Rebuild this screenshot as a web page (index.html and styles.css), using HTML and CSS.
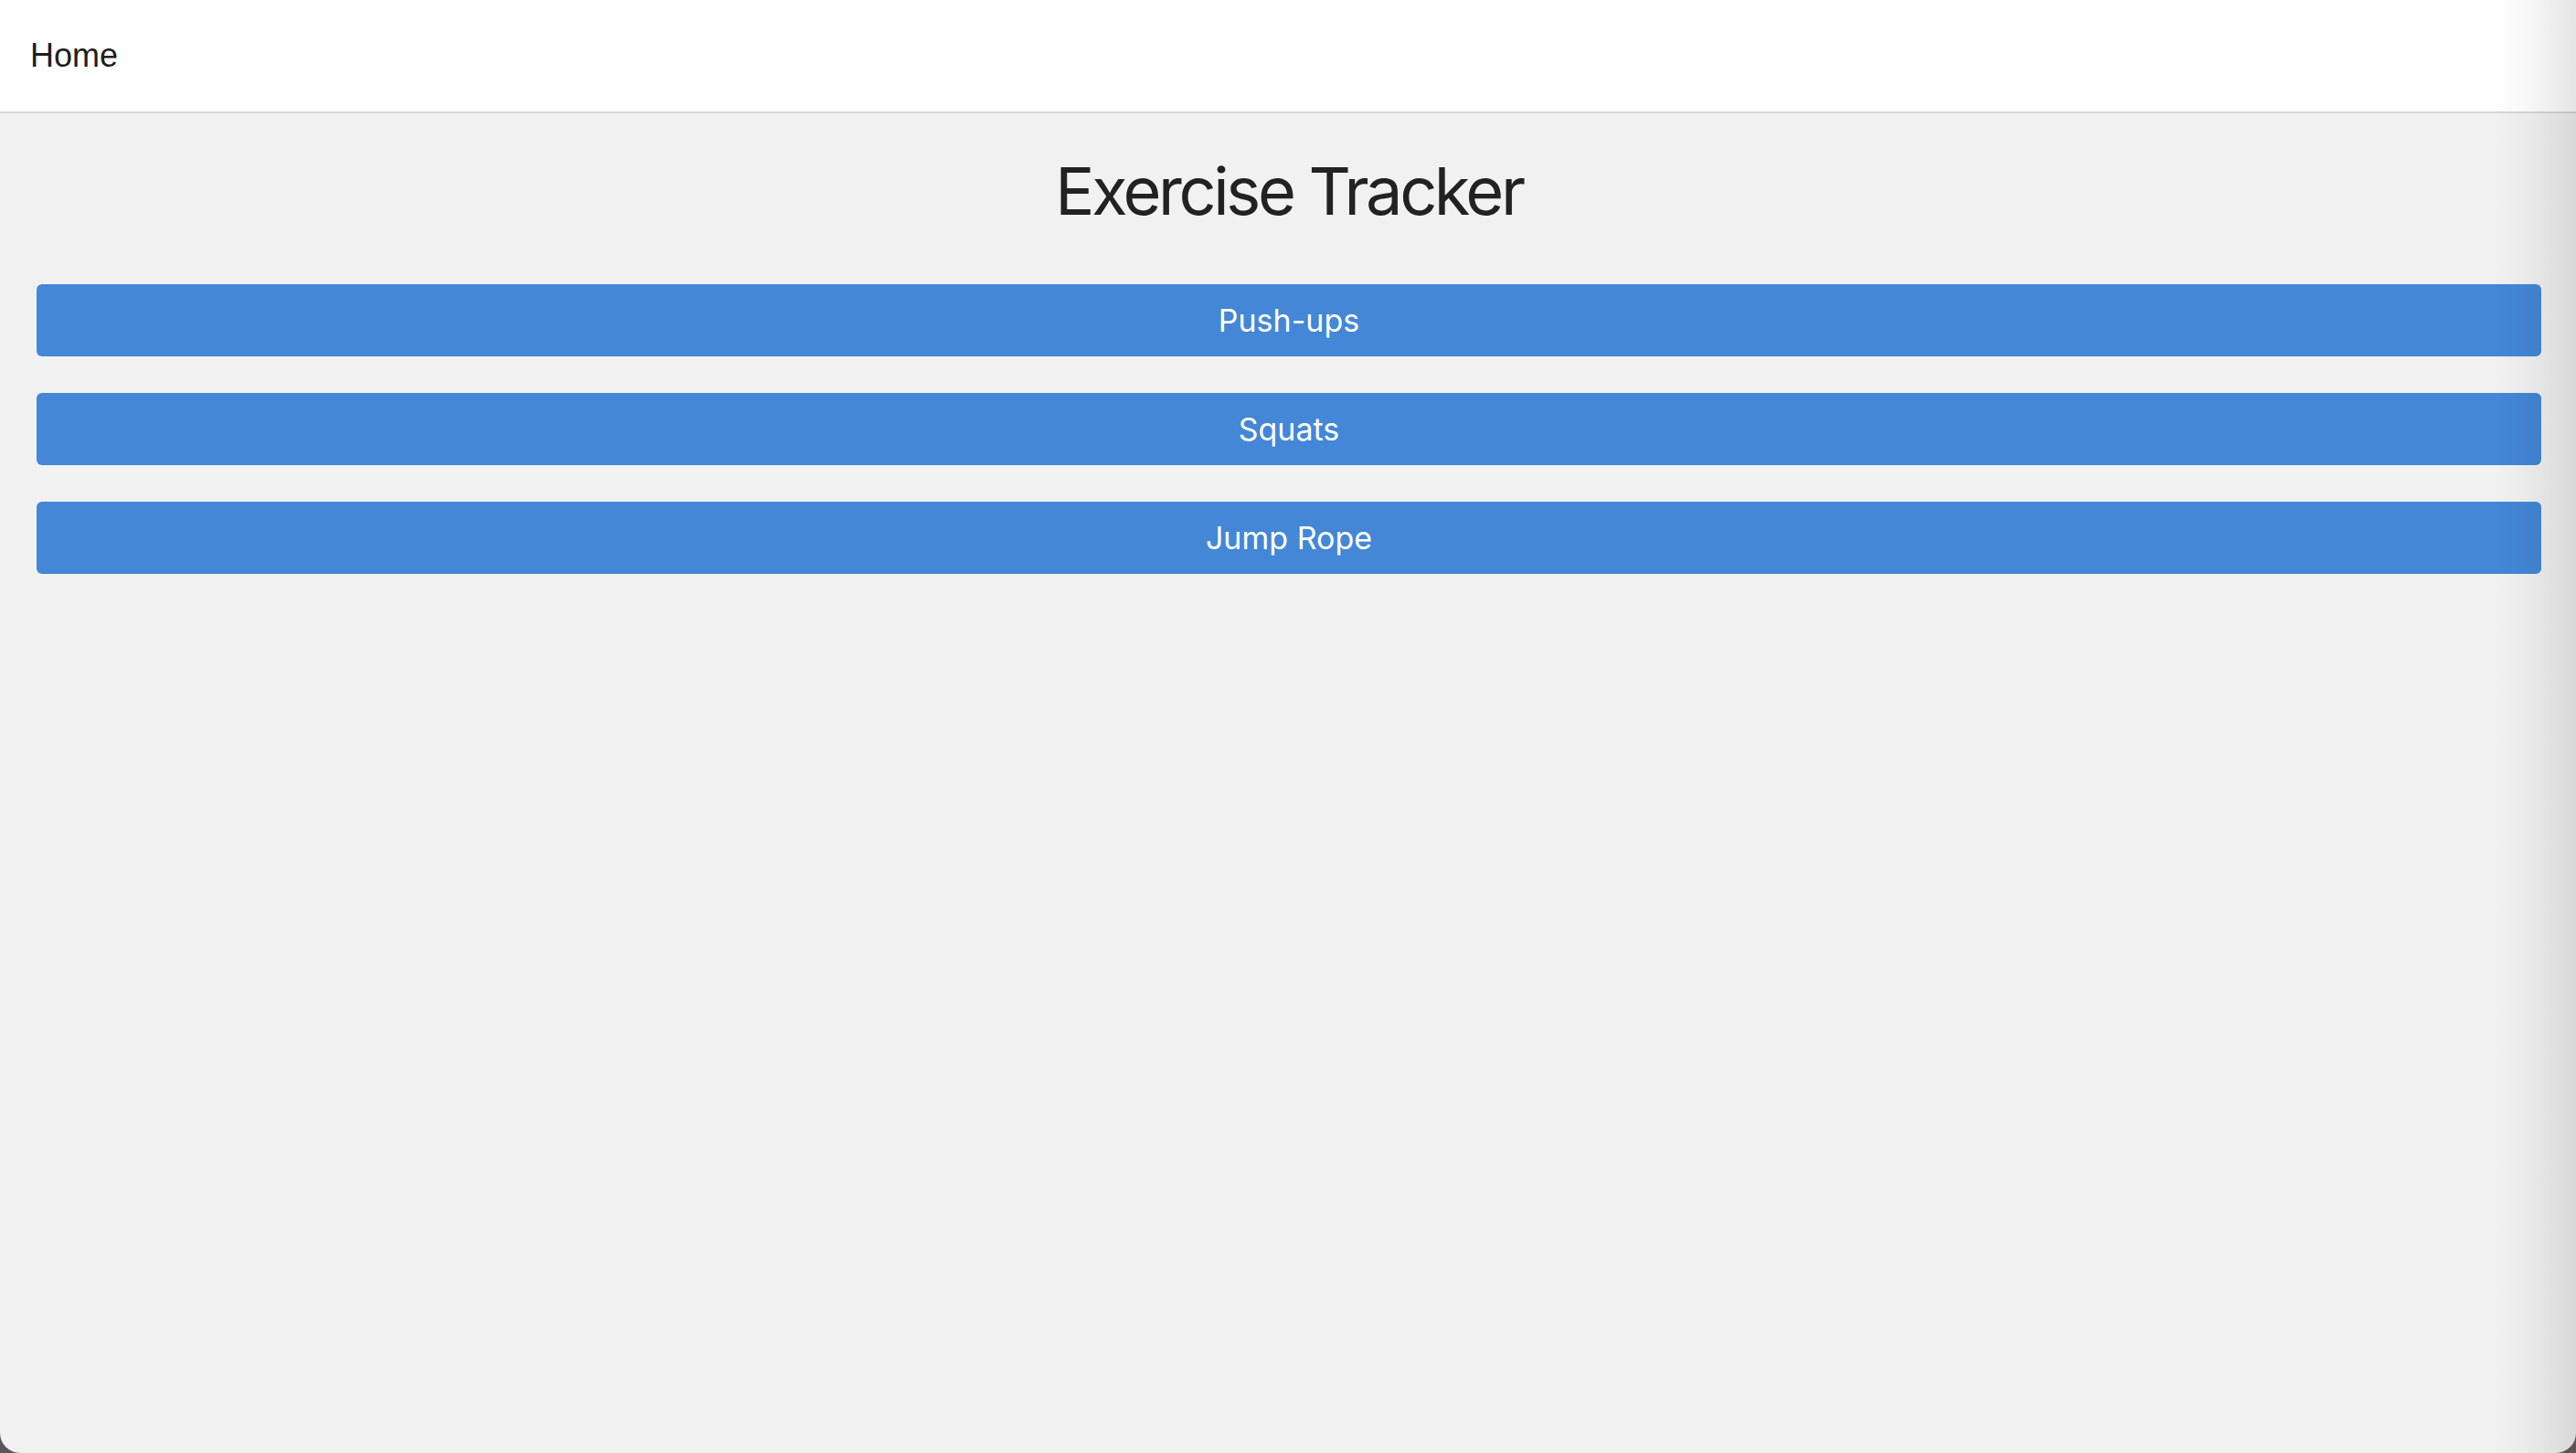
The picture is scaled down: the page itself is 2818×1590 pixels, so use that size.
FILE: index.html
```html
<!DOCTYPE html>
<html lang="en">
<head>
<meta charset="utf-8">
<title>Exercise Tracker</title>
<link rel="stylesheet" href="styles.css">
</head>
<body>
<div class="window">
  <header class="topbar">
    <a class="nav-link" href="#">Home</a>
  </header>
  <main class="content">
    <h1 class="title">Exercise Tracker</h1>
    <div class="exercise-list">
      <button class="exercise-btn">Push-ups</button>
      <button class="exercise-btn">Squats</button>
      <button class="exercise-btn">Jump Rope</button>
    </div>
  </main>
  <div class="edge-shade"></div>
</div>
</body>
</html>
```

FILE: styles.css
```css
html, body {
  margin: 0;
  padding: 0;
  height: 100%;
}

body {
  background: #5e5358;
  font-family: "Inter", "Liberation Sans", sans-serif;
}

.window {
  position: relative;
  height: 1590px;
  background: #f1f1f1;
  border-radius: 0 0 22px 22px;
  overflow: hidden;
  display: flex;
  flex-direction: column;
}

.topbar {
  height: 122px;
  background: #ffffff;
  border-bottom: 2px solid #d6d6d6;
  display: flex;
  align-items: center;
  padding-left: 33px;
}

.nav-link {
  font-family: "Liberation Sans", Arial, sans-serif;
  font-size: 36px;
  color: #1e1e1e;
  text-decoration: none;
}

.content {
  flex: 1;
  padding: 0 38px 0 40px;
}

.title {
  margin: 42px 0 59px;
  font-size: 72px;
  line-height: 86px;
  font-weight: 400;
  letter-spacing: -3.4px;
  color: #222222;
  text-align: center;
}

.exercise-list {
  display: flex;
  flex-direction: column;
  gap: 40px;
}

.exercise-btn {
  height: 79px;
  border: none;
  border-radius: 6px;
  background: #4387d6;
  color: #ffffff;
  font-family: "Inter", "Liberation Sans", sans-serif;
  font-size: 34px;
  cursor: pointer;
}

.edge-shade {
  position: absolute;
  top: 0;
  right: 0;
  width: 88px;
  height: 100%;
  background: linear-gradient(to right, rgba(0,0,0,0) 0%, rgba(0,0,0,0.03) 40%, rgba(0,0,0,0.1) 100%);
  pointer-events: none;
}
```
